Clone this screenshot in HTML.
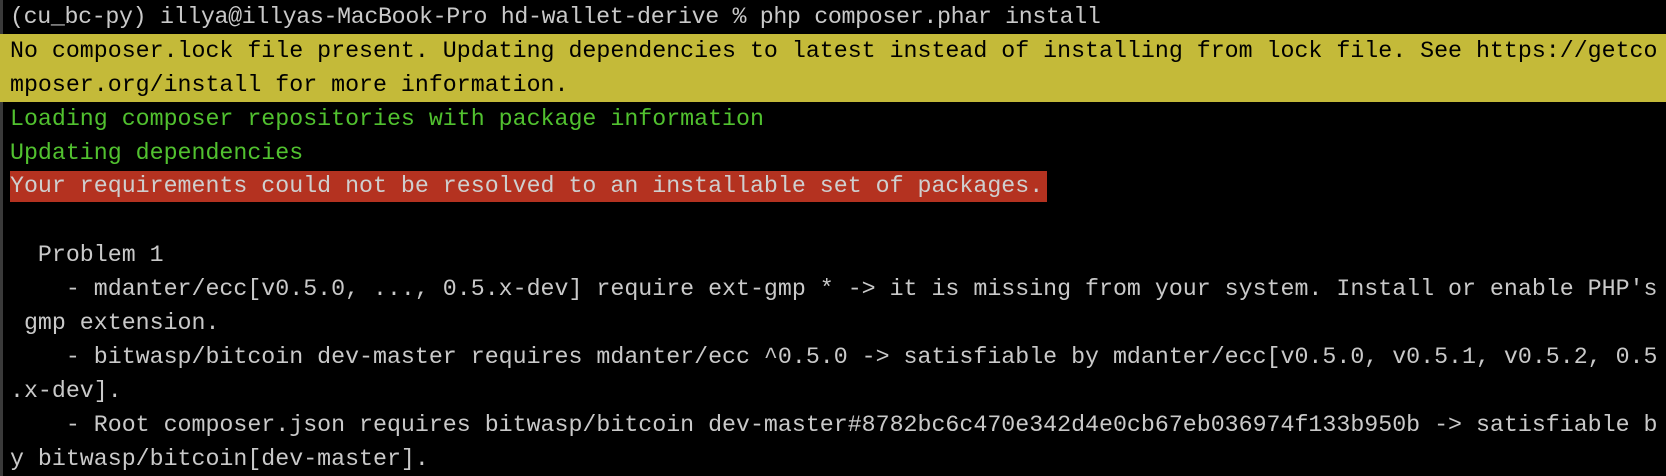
<!DOCTYPE html>
<html><head><meta charset="utf-8"><style>
html,body{margin:0;padding:0;background:#000;width:1666px;height:476px;overflow:hidden}
body{border-left:3px solid #3a3a3a;box-sizing:border-box}
.t{position:absolute;left:10px;top:0;font-family:"Liberation Mono",monospace;font-size:23.27px;line-height:34px;color:#c9c9c9;white-space:pre}
.l{height:34px}
.y{background:#c4ba39;color:#000;display:block;width:1656px;margin-left:-10px;padding-left:10px}
.g{color:#51c12f}
.r{background:#b43220;color:#cfcfcf;display:inline-block;height:31px;line-height:31px;vertical-align:top;margin-top:1px;padding-right:4px}
</style></head><body><div class="t"><div class="l" style="letter-spacing:-0.33px">(cu_bc-py) illya@illyas-MacBook-Pro hd-wallet-derive % php composer.phar install</div><div class="l y">No composer.lock file present. Updating dependencies to latest instead of installing from lock file. See https://getco</div><div class="l y">mposer.org/install for more information.</div><div class="l g">Loading composer repositories with package information</div><div class="l g">Updating dependencies</div><div class="l"><span class="r">Your requirements could not be resolved to an installable set of packages.</span></div><div class="l"></div><div class="l">  Problem 1</div><div class="l">    - mdanter/ecc[v0.5.0, ..., 0.5.x-dev] require ext-gmp * -&gt; it is missing from your system. Install or enable PHP's</div><div class="l"> gmp extension.</div><div class="l">    - bitwasp/bitcoin dev-master requires mdanter/ecc ^0.5.0 -&gt; satisfiable by mdanter/ecc[v0.5.0, v0.5.1, v0.5.2, 0.5</div><div class="l">.x-dev].</div><div class="l">    - Root composer.json requires bitwasp/bitcoin dev-master#8782bc6c470e342d4e0cb67eb036974f133b950b -&gt; satisfiable b</div><div class="l">y bitwasp/bitcoin[dev-master].</div></div></body></html>
